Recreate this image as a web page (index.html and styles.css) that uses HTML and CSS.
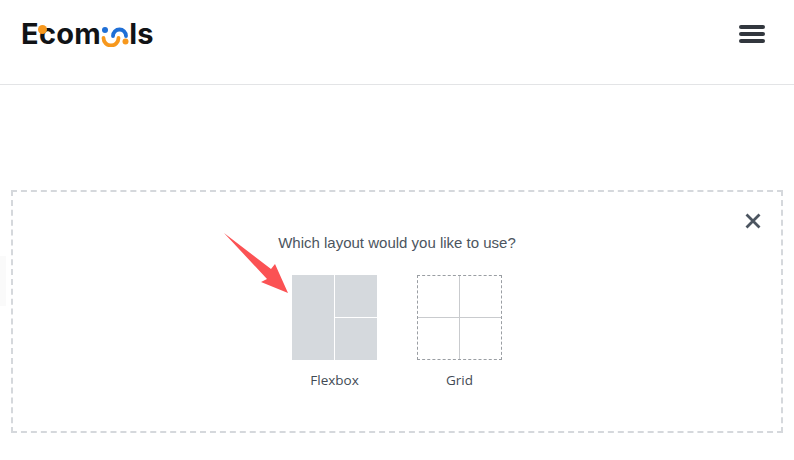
FILE: index.html
```html
<!DOCTYPE html>
<html lang="en">
<head>
    <meta charset="UTF-8">
    <meta name="viewport" content="width=device-width, initial-scale=1.0">
    <title>Ecomools</title>
    <link rel="stylesheet" href="styles.css">
</head>
<body>
    <header class="site-header">
        <a class="logo" href="#">
            <span class="logo-text">Ecom</span>
            <svg class="logo-oo" width="28" height="24" viewBox="0 0 28 24">
                <circle cx="4" cy="7" r="3" fill="#1f6fd6"/>
                <path d="M2.500 15a7.500 7.500 0 0 0 15 0" fill="none" stroke="#f7981d" stroke-width="3.800" stroke-linecap="round"/>
                <path d="M12 13a6.500 6.500 0 0 1 13 0" fill="none" stroke="#1f6fd6" stroke-width="3.800" stroke-linecap="round"/>
                <circle cx="24.500" cy="18.500" r="3" fill="#f7981d"/>
            </svg>
            <span class="logo-text">ls</span>
            <span class="logo-dot"></span>
        </a>
        <button class="menu-btn" aria-label="Menu">
            <span></span>
            <span></span>
            <span></span>
        </button>
    </header>

    <div class="side-tab"></div>

    <main class="chooser">
        <button class="close-btn" aria-label="Close">
            <svg width="16" height="16" viewBox="0 0 16 16">
                <path d="M1.500 1.500l13 13M14.500 1.500l-13 13" fill="none" stroke="#4c5560" stroke-width="2.800"/>
            </svg>
        </button>

        <p class="chooser-title">Which layout would you like to use?</p>

        <div class="options">
            <div class="option">
                <div class="layout-icon flexbox-icon">
                    <div class="cell cell-tall"></div>
                    <div class="cell"></div>
                    <div class="cell"></div>
                </div>
                <div class="option-label">Flexbox</div>
            </div>
            <div class="option">
                <div class="layout-icon grid-icon">
                    <div class="grid-cell"></div>
                    <div class="grid-cell"></div>
                    <div class="grid-cell"></div>
                    <div class="grid-cell"></div>
                </div>
                <div class="option-label">Grid</div>
            </div>
        </div>

        <!-- стрелка поверх контента -->
        <svg class="arrow" width="70" height="66" viewBox="0 0 70 66">
            <path d="M0 0L47 36L51 31L64 60L37 49L43 46Z" fill="#fb5254"/>
        </svg>
    </main>
</body>
</html>
```

FILE: styles.css
```css
body {
    margin: 0;
    background-color: #fff;
    font-family: "Liberation Sans", Arial, sans-serif;
    color: #4c5560;
    overflow: hidden;
}

.site-header {
    height: 84px;
    border-bottom: 1px solid #e3e4e6;
    padding: 0 29px 0 21px;
    display: flex;
    align-items: center;
    justify-content: space-between;
    margin-bottom: 105px;
}

.logo {
    position: relative;
    display: flex;
    align-items: center;
    margin-top: -17px;
    text-decoration: none;
    color: #111316;
}

.logo-text {
    font-family: "Inter", sans-serif;
    font-size: 29px;
    font-weight: 700;
    letter-spacing: 0.3px;
    line-height: 32px;
}

.logo-oo {
    margin: 2px 0 0 0;
}

.logo-dot {
    position: absolute;
    left: 17px;
    top: 7px;
    width: 9px;
    height: 9px;
    border-radius: 50%;
    background-color: #f7981d;
}

.menu-btn {
    background: none;
    border: none;
    padding: 0;
    width: 26px;
    margin-top: -17px;
    display: flex;
    flex-direction: column;
    gap: 3px;
}

.menu-btn span {
    display: block;
    height: 4px;
    border-radius: 2px;
    background-color: #32373e;
}

.side-tab {
    position: absolute;
    left: 0;
    top: 256px;
    width: 6px;
    height: 50px;
    background-color: #fafafa;
}

.chooser {
    position: relative;
    margin: 0 11px;
    height: 239px;
    border: 2px dashed #d5d8dc;
    display: flex;
    flex-direction: column;
    align-items: center;
}

.close-btn {
    position: absolute;
    right: 20px;
    top: 21px;
    background: none;
    border: none;
    padding: 0;
    line-height: 0;
}

.chooser-title {
    margin: 42px 0 0 0;
    font-size: 15px;
    line-height: 18px;
}

.options {
    display: flex;
    gap: 40px;
    margin-top: 23px;
}

.option {
    width: 85px;
}

.layout-icon {
    width: 85px;
    height: 85px;
    box-sizing: border-box;
    display: grid;
    grid-template-columns: 1fr 1fr;
    grid-template-rows: 1fr 1fr;
}

.flexbox-icon {
    gap: 1px;
}

.cell {
    background-color: #d5d9dd;
}

.cell-tall {
    grid-row: 1 / 3;
}

.grid-icon {
    border: 1px dashed #9a9ea3;
}

.grid-cell {
    border-right: 1px solid #c9cbce;
    border-bottom: 1px solid #c9cbce;
}

.grid-cell:nth-child(2),
.grid-cell:nth-child(4) {
    border-right: none;
}

.grid-cell:nth-child(3),
.grid-cell:nth-child(4) {
    border-bottom: none;
}

.option-label {
    margin-top: 12px;
    text-align: center;
    font-family: "Open Sans", sans-serif;
    font-size: 13.500px;
    font-weight: 500;
    line-height: 17px;
    color: #424a54;
}

.arrow {
    position: absolute;
    left: 211px;
    top: 41px;
}
```
